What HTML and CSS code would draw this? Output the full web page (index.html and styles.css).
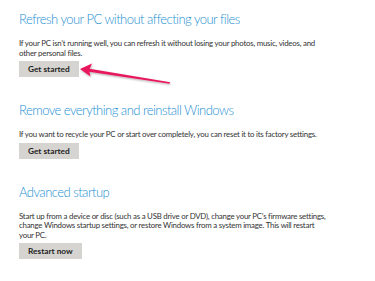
FILE: index.html
```html
<!DOCTYPE html>
<html>
<head>
<meta charset="utf-8">
<link rel="stylesheet" href="styles.css">
</head>
<body>
<main class="page">
  <section class="option">
    <h2 class="option-title">Refresh your PC without affecting your files</h2>
    <p class="option-desc">If your PC isn’t running well, you can refresh it without losing your photos, music, videos, and other personal files.</p>
    <button class="btn">Get started</button>
  </section>
  <section class="option">
    <h2 class="option-title">Remove everything and reinstall Windows</h2>
    <p class="option-desc">If you want to recycle your PC or start over completely, you can reset it to its factory settings.</p>
    <button class="btn">Get started</button>
  </section>
  <section class="option">
    <h2 class="option-title">Advanced startup</h2>
    <p class="option-desc">Start up from a device or disc (such as a USB drive or DVD), change your PC’s firmware settings, change Windows startup settings, or restore Windows from a system image. This will restart your PC.</p>
    <button class="btn">Restart now</button>
  </section>
  <svg class="arrow" width="104" height="30" viewBox="0 0 104 30">
    <defs>
      <filter id="sh" x="-20%" y="-50%" width="140%" height="200%">
        <feDropShadow dx="0.5" dy="1" stdDeviation="0.8" flood-color="#000" flood-opacity="0.35"/>
      </filter>
    </defs>
    <g filter="url(#sh)">
      <path d="M10 6.6 L92 20.3 L91.6 21.7 L9.4 9.6 Z" fill="#e8175d"/>
      <path d="M2 7 L14 1.5 L11 8.3 L12.5 14.5 Z" fill="#e8175d"/>
    </g>
  </svg>
</main>
</body>
</html>
```
FILE: styles.css
```css
html, body {
  margin: 0;
  padding: 0;
  background: #ffffff;
}
.page {
  position: relative;
  padding: 9px 0 0 19px;
  width: 356px;
  height: 281px;
  box-sizing: border-box;
  font-family: "Lato", "Open Sans", sans-serif;
}
.option {
  display: flex;
  flex-direction: column;
  align-items: flex-start;
  margin-bottom: 23px;
}
.option-title {
  margin: 0;
  font-weight: 300;
  font-size: 13px;
  line-height: 20px;
  color: #1d8fd1;
  letter-spacing: -0.52px;
}
.option-desc {
  margin: 10px 0 3px 0;
  width: 308.5px;
  font-size: 7.85px;
  line-height: 9.5px;
  color: #333333;
  letter-spacing: -0.22px;
}
.btn {
  border: none;
  background: #d6d4d0;
  color: #1e1e1e;
  font-family: inherit;
  font-weight: 700;
  font-size: 8.3px;
  height: 16px;
  padding: 0 9px;
  margin: 0;
}
.arrow {
  position: absolute;
  left: 78px;
  top: 62px;
}
```
